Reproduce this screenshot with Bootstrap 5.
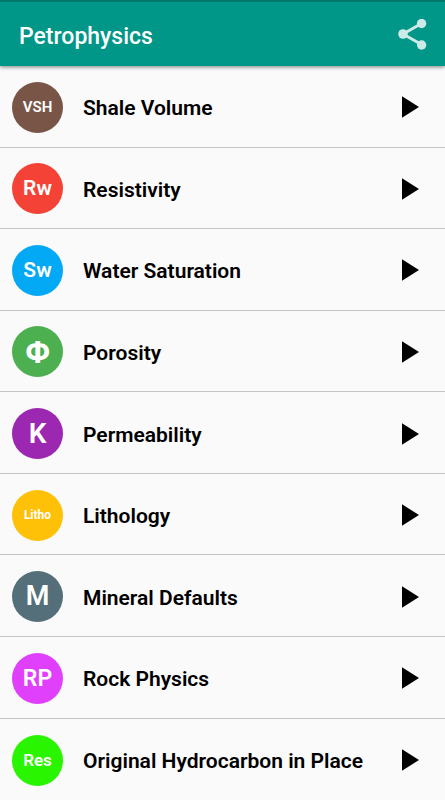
<!DOCTYPE html>
<html lang="en">
<head>
<meta charset="utf-8">
<meta name="viewport" content="width=device-width, initial-scale=1">
<title>Petrophysics</title>
<link href="https://cdn.jsdelivr.net/npm/bootstrap@5.3.0/dist/css/bootstrap.min.css" rel="stylesheet">
<style>
  body { font-family: Roboto, "Liberation Sans", sans-serif; background: #fafafa; color: #000; }
  .app-bar { height: 66px; background: #009688; border-top: 2px solid #00796b; padding: 2px 16px 0 19px; box-shadow: 0 1px 4px rgba(0,0,0,.5); z-index: 1; }
  .app-title { font-size: 23px; line-height: 28px; font-weight: 500; color: #fff; padding-top: 3px; }
  .topic-list { --bs-list-group-bg: transparent; --bs-list-group-color: #000; --bs-list-group-border-color: #c4c4c4; --bs-list-group-action-hover-color: #000; }
  .topic { flex: 1 0 80px; padding: 2px 26px 0 12px; gap: 20px; }
  .topic-name { font-size: 21px; line-height: 26px; font-weight: 600; padding-top: 2px; }
  .disc { width: 51px; height: 51px; color: #fff; font-weight: 600; line-height: 1; }
  .fs-12 { font-size: 12px; } .fs-15 { font-size: 15px; } .fs-17 { font-size: 17px; }
  .fs-21 { font-size: 21px; } .fs-23 { font-size: 23px; } .fs-27 { font-size: 27px; } .fs-28 { font-size: 28px; } .fs-32 { font-size: 32px; }
  .brown { background: #795548; } .red { background: #f44336; } .blue { background: #03a9f4; }
  .green { background: #4caf50; } .purple { background: #9c27b0; } .amber { background: #ffc107; }
  .slate { background: #546e7a; } .pink { background: #e040fb; } .lime { background: #2af500; }
</style>
<script src="https://cdn.jsdelivr.net/npm/bootstrap@5.3.0/dist/js/bootstrap.bundle.min.js"></script>
</head>
<body class="d-flex flex-column min-vh-100">
<header class="app-bar d-flex align-items-center justify-content-between position-relative flex-shrink-0">
  <h1 class="app-title m-0">Petrophysics</h1>
  <button type="button" class="btn p-0 border-0 d-flex" aria-label="Share">
    <svg width="32" height="32" viewBox="0 0 32 32" fill="#cceae7" stroke="#cceae7" aria-hidden="true">
      <path d="M24.500 4.500 6 15l18.500 10.500" fill="none" stroke-width="3"/>
      <g stroke="none"><circle cx="24.600" cy="4.500" r="4.700"/><circle cx="6" cy="15" r="4.800"/><circle cx="24.600" cy="26" r="4.700"/></g>
    </svg>
  </button>
</header>
<svg class="d-none" aria-hidden="true"><symbol id="play" viewBox="0 0 17 22"><path d="M0 .3v21.400L17 11z"/></symbol></svg>
<main class="list-group list-group-flush topic-list flex-grow-1">
  <a href="#shale" class="list-group-item list-group-item-action topic d-flex align-items-center"><span class="disc brown fs-15 rounded-circle d-flex align-items-center justify-content-center flex-shrink-0">VSH</span><span class="topic-name flex-grow-1">Shale Volume</span><svg class="flex-shrink-0" width="17" height="22" aria-hidden="true"><use href="#play"/></svg></a>
  <a href="#resistivity" class="list-group-item list-group-item-action topic d-flex align-items-center"><span class="disc red fs-21 rounded-circle d-flex align-items-center justify-content-center flex-shrink-0">Rw</span><span class="topic-name flex-grow-1">Resistivity</span><svg class="flex-shrink-0" width="17" height="22" aria-hidden="true"><use href="#play"/></svg></a>
  <a href="#saturation" class="list-group-item list-group-item-action topic d-flex align-items-center"><span class="disc blue fs-21 rounded-circle d-flex align-items-center justify-content-center flex-shrink-0">Sw</span><span class="topic-name flex-grow-1">Water Saturation</span><svg class="flex-shrink-0" width="17" height="22" aria-hidden="true"><use href="#play"/></svg></a>
  <a href="#porosity" class="list-group-item list-group-item-action topic d-flex align-items-center"><span class="disc green fs-32 fw-bold rounded-circle d-flex align-items-center justify-content-center flex-shrink-0">Φ</span><span class="topic-name flex-grow-1">Porosity</span><svg class="flex-shrink-0" width="17" height="22" aria-hidden="true"><use href="#play"/></svg></a>
  <a href="#permeability" class="list-group-item list-group-item-action topic d-flex align-items-center"><span class="disc purple fs-28 rounded-circle d-flex align-items-center justify-content-center flex-shrink-0">K</span><span class="topic-name flex-grow-1">Permeability</span><svg class="flex-shrink-0" width="17" height="22" aria-hidden="true"><use href="#play"/></svg></a>
  <a href="#lithology" class="list-group-item list-group-item-action topic d-flex align-items-center"><span class="disc amber fs-12 fw-bold rounded-circle d-flex align-items-center justify-content-center flex-shrink-0">Litho</span><span class="topic-name flex-grow-1">Lithology</span><svg class="flex-shrink-0" width="17" height="22" aria-hidden="true"><use href="#play"/></svg></a>
  <a href="#minerals" class="list-group-item list-group-item-action topic d-flex align-items-center"><span class="disc slate fs-27 rounded-circle d-flex align-items-center justify-content-center flex-shrink-0">M</span><span class="topic-name flex-grow-1">Mineral Defaults</span><svg class="flex-shrink-0" width="17" height="22" aria-hidden="true"><use href="#play"/></svg></a>
  <a href="#rock" class="list-group-item list-group-item-action topic d-flex align-items-center"><span class="disc pink fs-23 rounded-circle d-flex align-items-center justify-content-center flex-shrink-0">RP</span><span class="topic-name flex-grow-1">Rock Physics</span><svg class="flex-shrink-0" width="17" height="22" aria-hidden="true"><use href="#play"/></svg></a>
  <a href="#hydrocarbon" class="list-group-item list-group-item-action topic d-flex align-items-center"><span class="disc lime fs-17 rounded-circle d-flex align-items-center justify-content-center flex-shrink-0">Res</span><span class="topic-name flex-grow-1">Original Hydrocarbon in Place</span><svg class="flex-shrink-0" width="17" height="22" aria-hidden="true"><use href="#play"/></svg></a>
</main>
</body>
</html>
